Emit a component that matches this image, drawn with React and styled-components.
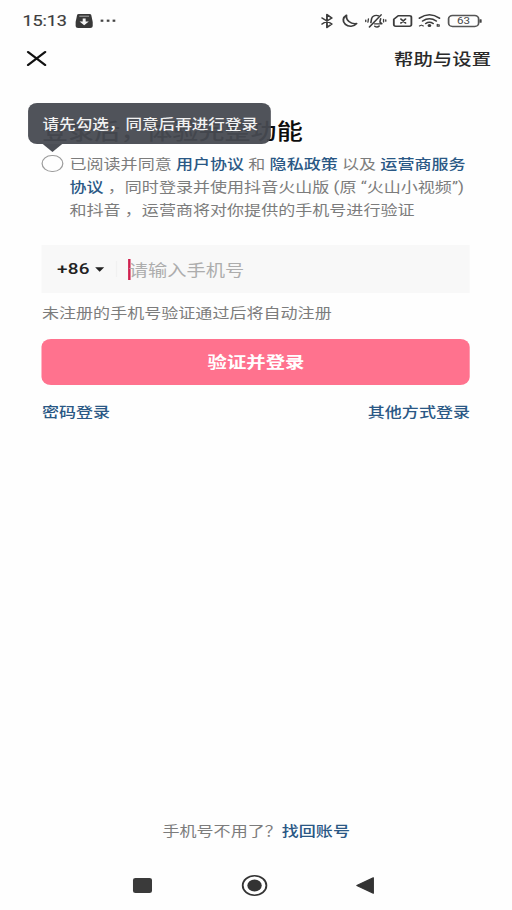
import React from 'react';
import styled, { createGlobalStyle } from 'styled-components';

const GlobalStyle = createGlobalStyle`
  * { box-sizing: border-box; }
  body {
    margin: 0;
    background: #fefefe;
    overflow: hidden;
  }
`;

// the screen is laid out narrow and then widened, so glyphs and icons widen too
const STRETCH = 1.22;
const w = px => `${px / STRETCH}px`;

const Screen = styled.div`
  display: flex;
  flex-direction: column;
  width: ${w(512)};
  height: 910px;
  transform: scaleX(${STRETCH});
  transform-origin: 0 0;
  background: #fefefe;
  color: #7c7c7c;
  font-family: Roboto, "Noto Sans CJK SC", sans-serif;
  font-size: ${w(17.05)};
  white-space: nowrap;
`;

const StatusBar = styled.div`
  display: flex;
  align-items: center;
  height: 41px;
  padding: 0 ${w(30.5)} 0 ${w(22.5)};
  color: #3c3c3c;
`;

const Clock = styled.span`
  width: ${w(53)};
  font-size: 14.8px;
  letter-spacing: -0.1px;
  -webkit-text-stroke: 0.2px #3c3c3c;
`;

const StatusIcons = styled.div`
  display: flex;
  align-items: center;
  margin-left: auto;
`;

const Icon = styled.svg`
  display: block;
  flex: none;
  margin-left: ${props => w(props.$gap || 0)};
  overflow: visible;
`;

const Header = styled.div`
  display: flex;
  align-items: center;
  justify-content: space-between;
  height: 35px;
  padding: 0 ${w(21)} 0 ${w(26.5)};
  color: #2a2a2a;
  font-size: ${w(19.4)};
  font-weight: 500;
`;

const Content = styled.div`
  position: relative;
  display: flex;
  flex-direction: column;
  padding: 37px ${w(42)} 0;
`;

const Title = styled.h1`
  margin: 0;
  height: 37px;
  line-height: 37px;
  font-size: ${w(26.1)};
  font-weight: 500;
  color: #0c0c0c;
`;

const Tooltip = styled.div`
  position: absolute;
  top: 27px;
  left: ${w(28.5)};
  width: ${w(242.5)};
  height: 40.5px;
  padding-left: ${w(14)};
  border-radius: ${w(9)} / 8px;
  background: rgba(71, 74, 81, 0.95);
  color: #f2f2f2;
  font-size: ${w(16.6)};
  font-weight: 500;
  line-height: 42px;

  &:after {
    content: '';
    position: absolute;
    top: 100%;
    left: ${w(14)};
    border: solid transparent;
    border-width: 8px ${w(10)} 0;
    border-top-color: #4b4e55;
  }
`;

const Agreement = styled.div`
  display: flex;
  padding-top: 2.5px;
`;

const Radio = styled.span`
  flex: none;
  width: ${w(21)};
  height: 17px;
  margin: 2px ${w(6.5)} 0 0;
  border: 1.2px solid #9c9c9c;
  border-radius: 50%;
`;

const Terms = styled.p`
  margin: 0;
  line-height: 23px;
`;

const Link = styled.a`
  color: #2a5885;
  font-weight: 500;
`;

const PhoneField = styled.div`
  display: flex;
  align-items: center;
  height: 48px;
  margin-top: 23.5px;
  padding-left: ${w(15)};
  background: #f8f8f8;
`;

const CountryCode = styled.span`
  display: flex;
  align-items: center;
  width: ${w(60.5)};
  border-right: 1px solid #f1f1f1;
  color: #222;
  font-size: 15.5px;
  font-weight: 500;
  letter-spacing: 0.2px;
  line-height: 16px;
`;

const Cursor = styled.span`
  width: ${w(3)};
  height: 21px;
  margin-left: ${w(10.4)};
  background: #d0214f;
`;

const Placeholder = styled.span`
  margin-left: ${w(-2.2)};
  color: #adadad;
  font-size: ${w(19.3)};
`;

const Hint = styled.div`
  height: 46px;
  line-height: 40px;
`;

const Submit = styled.button`
  height: 45.5px;
  padding: 0;
  border: 0;
  border-radius: ${w(9.5)} / 8px;
  background: #ff728e;
  color: #fff;
  font-family: inherit;
  font-size: ${w(19.4)};
  font-weight: 700;
  line-height: 48px;
`;

const Links = styled.div`
  display: flex;
  justify-content: space-between;
  line-height: 54px;
`;

const Footer = styled.div`
  margin-top: auto;
  padding-left: ${w(162.5)};
  line-height: 24px;
`;

const NavBar = styled.div`
  display: flex;
  align-items: center;
  height: 49px;
  margin-top: 18px;
  padding-left: ${w(133)};
`;

const CloseIcon = () => (
  <Icon width="16" height="15" viewBox="0 0 16 15" stroke="#111" strokeWidth="2" strokeLinecap="round">
    <path d="M1 1l14 13M15 1L1 14" />
  </Icon>
);

const InboxIcon = () => (
  <Icon width="14" height="14" viewBox="0 0 14 14">
    <path d="M2.6 0h8.8Q12.6 0 12.8 1L14 8v4q0 2-2 2H2q-2 0-2-2V8L1.2 1Q1.4 0 2.6 0z" fill="#383838" />
    <path d="M3 2.2h8" stroke="#aaa" strokeWidth="1" />
    <path d="M5.8 4.5h2.4v3h2.6L7 11.2 3.2 7.5h2.6z" fill="#f4f4f4" />
  </Icon>
);

const MoreIcon = () => (
  <Icon $gap={8} width="13" height="4" viewBox="0 0 13 4" fill="#444">
    <rect x=".5" y=".6" width="2.2" height="2.2" />
    <rect x="5.5" y=".6" width="2.2" height="2.2" />
    <rect x="10.3" y=".6" width="2.2" height="2.2" />
  </Icon>
);

const stroke = { fill: 'none', stroke: '#3c3c3c', strokeWidth: 1.5, strokeLinecap: 'round', strokeLinejoin: 'round' };

const BluetoothIcon = () => (
  <Icon {...stroke} width="10" height="14" viewBox="0 0 10 14">
    <path d="M1 4l8 6-4 3.4V.6L9 4l-8 6" />
  </Icon>
);

const MoonIcon = () => (
  <Icon {...stroke} $gap={7} width="14" height="14" viewBox="0 0 14 14">
    <path d="M5 1.200a6 6 0 1 0 8.300 8.400Q9.500 10.200 7 7.600T5 1.200z" />
  </Icon>
);

// struck-through bell with vibration marks at both ends
const MuteIcon = () => (
  <Icon {...stroke} $gap={7} strokeWidth="1.3" width="18" height="14" viewBox="0 0 18 14">
    <path d="M3.800 13L13.400.8" />
    <path d="M5 8.600l.6-4Q6.500 1.400 9.500 1.400q1 0 1.800.5" />
    <path d="M13 4.600L12.400 8l1.600 1.800H8" />
    <path d="M8.200 12.200q2 1.600 3.600-.2" />
    <path d="M3 4.800l-.4 3.400M.8 6v1.600M15.400 5.200v2.800M17.200 5.800v1.400" strokeWidth="1.1" />
  </Icon>
);

const SimIcon = () => (
  <Icon {...stroke} $gap={7} width="16" height="12" viewBox="0 0 16 12">
    <path d="M4.400.8h9.200q1.600 0 1.600 1.600v7.200q0 1.600-1.600 1.600H2.400Q.8 11.200.8 9.600V4.200z" />
    <path d="M6.600 4l3.800 4M10.400 4L6.600 8" />
  </Icon>
);

const WifiIcon = () => (
  <Icon {...stroke} $gap={6} width="18" height="13" viewBox="0 0 18 13">
    <path d="M.8 4.200Q9-2.600 17.200 4.200M3.400 7Q9 2.400 14.600 7M6 9.500Q9 7 12 9.500" />
    <circle cx="9" cy="11.5" r=".8" fill="#3c3c3c" />
    <path d="M.8 12l1.600-.9 1.600.9M15.400 10.200v2h1.600v-1.400h-1.400" strokeWidth="1" />
  </Icon>
);

const BatteryIcon = () => (
  <Icon $gap={6.5} width="28" height="12" viewBox="0 0 28 12">
    <rect x=".7" y=".5" width="24.6" height="11" rx="3.2" fill="none" stroke="#555" strokeWidth="1.4" />
    <rect x="26" y="4.2" width="1.8" height="3.6" rx=".6" fill="#444" />
    <text x="13" y="9.3" textAnchor="middle" fontSize="9.5" fontFamily="Roboto, sans-serif" fill="#444">63</text>
  </Icon>
);

const App = () => (
  <>
    <GlobalStyle />
    <Screen>
      <StatusBar>
        <Clock>15:13</Clock>
        <InboxIcon />
        <MoreIcon />
        <StatusIcons>
          <BluetoothIcon />
          <MoonIcon />
          <MuteIcon />
          <SimIcon />
          <WifiIcon />
          <BatteryIcon />
        </StatusIcons>
      </StatusBar>

      <Header>
        <CloseIcon />
        <span>帮助与设置</span>
      </Header>

      <Content>
        <Title>登录后，体验完整功能</Title>
        <Tooltip>请先勾选，同意后再进行登录</Tooltip>

        <Agreement>
          <Radio />
          <Terms>
            已阅读并同意 <Link>用户协议</Link> 和 <Link>隐私政策</Link> 以及 <Link>运营商服务</Link><br />
            <Link>协议</Link> ，同时登录并使用抖音火山版 (原 “火山小视频”)<br />
            和抖音 ，运营商将对你提供的手机号进行验证
          </Terms>
        </Agreement>

        <PhoneField>
          <CountryCode>
            +86
            <Icon $gap={6} width="7.4" height="5" viewBox="0 0 8 5" fill="#222"><path d="M0 0h8L4 5z" /></Icon>
          </CountryCode>
          <Cursor />
          <Placeholder>请输入手机号</Placeholder>
        </PhoneField>
        <Hint>未注册的手机号验证通过后将自动注册</Hint>
        <Submit>验证并登录</Submit>
        <Links>
          <Link>密码登录</Link>
          <Link>其他方式登录</Link>
        </Links>
      </Content>

      <Footer>手机号不用了？<Link>找回账号</Link></Footer>

      <NavBar>
        <Icon width="15.6" height="15" viewBox="0 0 15.6 15"><rect width="15.6" height="15" rx="2" fill="#3a3a3a" /></Icon>
        <Icon $gap={89.3} width="21.3" height="21" viewBox="0 0 21 21">
          <circle cx="10.5" cy="10.5" r="9.7" fill="none" stroke="#333" strokeWidth="1.5" />
          <circle cx="10.5" cy="10.5" r="5.9" fill="#333" />
        </Icon>
        <Icon $gap={89.5} width="14.5" height="17" viewBox="0 0 14.5 17"><path d="M14 .8v15.400L.5 8.500z" fill="#333" stroke="#333" strokeLinejoin="round" /></Icon>
      </NavBar>
    </Screen>
  </>
);

export default App;
